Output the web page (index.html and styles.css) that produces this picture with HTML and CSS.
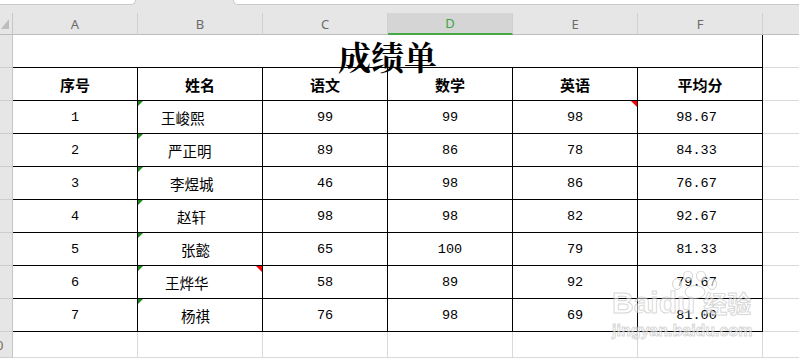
FILE: index.html
```html
<!DOCTYPE html>
<html lang="zh-CN">
<head>
<meta charset="utf-8">
<title>成绩单</title>
<link rel="stylesheet" href="styles.css">
</head>
<body>
<div class="top">
  <div class="tab tab-left"></div>
  <div class="tab tab-right"></div>
</div>
<div class="sheet">
  <div class="corner"><svg class="corner-tri" width="8" height="10" viewBox="0 0 8 10"><polygon points="0,10 8,10 8,0" fill="#bdbdbd"/></svg></div>
  <div class="colhead">A</div>
  <div class="colhead">B</div>
  <div class="colhead">C</div>
  <div class="colhead active">D</div>
  <div class="colhead">E</div>
  <div class="colhead">F</div>
  <div class="colhead rest"></div>

  <div class="rowhead"><span>1</span></div>
  <div class="cell title">成绩单</div>
  <div class="cell g"></div>

  <div class="rowhead"><span>2</span></div>
  <div class="cell tb th">序号</div>
  <div class="cell tb th">姓名</div>
  <div class="cell tb th">语文</div>
  <div class="cell tb th">数学</div>
  <div class="cell tb th">英语</div>
  <div class="cell tb th">平均分</div>
  <div class="cell g"></div>

  <div class="rowhead"><span>3</span></div>
  <div class="cell tb num">1</div>
  <div class="cell tb name note name-1">王峻熙</div>
  <div class="cell tb num">99</div>
  <div class="cell tb num">99</div>
  <div class="cell tb num comment">98</div>
  <div class="cell tb num avg">98.67</div>
  <div class="cell g"></div>

  <div class="rowhead"><span>4</span></div>
  <div class="cell tb num">2</div>
  <div class="cell tb name note name-2">严正明</div>
  <div class="cell tb num">89</div>
  <div class="cell tb num">86</div>
  <div class="cell tb num">78</div>
  <div class="cell tb num avg">84.33</div>
  <div class="cell g"></div>

  <div class="rowhead"><span>5</span></div>
  <div class="cell tb num">3</div>
  <div class="cell tb name note name-3">李煜城</div>
  <div class="cell tb num">46</div>
  <div class="cell tb num">98</div>
  <div class="cell tb num">86</div>
  <div class="cell tb num avg">76.67</div>
  <div class="cell g"></div>

  <div class="rowhead"><span>6</span></div>
  <div class="cell tb num">4</div>
  <div class="cell tb name note name-4">赵轩</div>
  <div class="cell tb num">98</div>
  <div class="cell tb num">98</div>
  <div class="cell tb num">82</div>
  <div class="cell tb num avg">92.67</div>
  <div class="cell g"></div>

  <div class="rowhead"><span>7</span></div>
  <div class="cell tb num">5</div>
  <div class="cell tb name note name-5">张懿</div>
  <div class="cell tb num">65</div>
  <div class="cell tb num">100</div>
  <div class="cell tb num">79</div>
  <div class="cell tb num avg">81.33</div>
  <div class="cell g"></div>

  <div class="rowhead"><span>8</span></div>
  <div class="cell tb num">6</div>
  <div class="cell tb name note comment name-6">王烨华</div>
  <div class="cell tb num">58</div>
  <div class="cell tb num">89</div>
  <div class="cell tb num">92</div>
  <div class="cell tb num avg">79.67</div>
  <div class="cell g"></div>

  <div class="rowhead"><span>9</span></div>
  <div class="cell tb num">7</div>
  <div class="cell tb name note name-7">杨祺</div>
  <div class="cell tb num">76</div>
  <div class="cell tb num">98</div>
  <div class="cell tb num">69</div>
  <div class="cell tb num avg">81.00</div>
  <div class="cell g"></div>

  <div class="rowhead"><span>10</span></div>
  <div class="cell"></div>
  <div class="cell"></div>
  <div class="cell"></div>
  <div class="cell"></div>
  <div class="cell"></div>
  <div class="cell"></div>
  <div class="cell g"></div>
</div>

<div class="watermark">
  <svg class="wm-paw" width="52" height="28" viewBox="0 0 52 28">
    <g fill="rgba(255,255,255,0.6)" stroke="rgba(160,160,160,0.45)" stroke-width="1">
      <ellipse cx="8" cy="13" rx="4.5" ry="5.5"/>
      <ellipse cx="19" cy="5" rx="4.5" ry="5"/>
      <ellipse cx="32" cy="5" rx="4.5" ry="5"/>
      <ellipse cx="43" cy="13" rx="4.5" ry="5.5"/>
      <ellipse cx="26" cy="21" rx="10" ry="6.5"/>
    </g>
  </svg>
  <div class="wm-logo"><span>Baidu</span><span class="wm-jy">经验</span></div>
  <div class="wm-url">jingyan.baidu.com</div>
</div>
</body>
</html>
```
FILE: styles.css
```css
* { box-sizing: border-box; }

html, body {
  margin: 0;
  height: 100%;
  overflow: hidden;
  background: #fff;
}

body {
  font-family: "Noto Sans CJK SC", sans-serif;
  color: #000;
  position: relative;
}

/* top tab strip */
.top {
  height: 13px;
  background: #e6e6e6;
  display: flex;
  align-items: flex-start;
}

.tab {
  height: 5px;
  background: #fff;
  border-bottom: 1px solid #c9c9c9;
}

.tab-left {
  width: 136px;
  border-right: 1px solid #c9c9c9;
  border-bottom-right-radius: 5px;
}

.tab-right {
  flex: 1;
  margin-left: 97px;
  border-left: 1px solid #c9c9c9;
  border-bottom-left-radius: 5px;
}

/* sheet grid */
.sheet {
  display: grid;
  grid-template-columns: 13px repeat(6, 125px) 1fr;
  grid-template-rows: 22px repeat(9, 33px) 1fr;
  height: calc(100% - 13px);
}

.corner {
  background: #e6e6e6;
  border-right: 1px solid #c6c6c6;
  border-bottom: 1px solid #bcbcbc;
}

.corner-tri {
  display: block;
  margin: 6px 0 0 1px;
}

.colhead {
  background: #e6e6e6;
  border-right: 1px solid #d0d0d0;
  border-bottom: 1px solid #bcbcbc;
  color: #6b6b6b;
  font: 13px "Noto Sans", "Liberation Sans", sans-serif;
  display: flex;
  align-items: center;
  justify-content: center;
}

.colhead.active {
  background: #d5d5d5;
  color: #3ea53e;
  border-bottom: 2px solid #47a847;
}

.colhead.rest {
  border-right: none;
}

.rowhead {
  background: #e6e6e6;
  border-right: 1px solid #c6c6c6;
  border-bottom: 1px solid #cdcdcd;
  overflow: hidden;
  display: flex;
  align-items: center;
  color: #7a6a5a;
  font: 13px "Noto Sans", "Liberation Sans", sans-serif;
}

.rowhead span {
  flex: none;
  width: 24px;
  margin-left: -16px;
  text-align: center;
}

.cell {
  border-right: 1px solid #d9d9d9;
  border-bottom: 1px solid #d9d9d9;
  display: flex;
  align-items: center;
  justify-content: center;
  position: relative;
  white-space: nowrap;
}

.cell.tb {
  border-right-color: #000;
  border-bottom-color: #000;
}

.cell.g {
  border-right: none;
}

.title {
  grid-column: 2 / 8;
  border-right-color: #000;
  border-bottom-color: #000;
  font-family: "Noto Serif CJK SC", "Noto Sans CJK SC", serif;
  font-size: 33px;
  font-weight: 700;
  line-height: 33px;
  align-items: flex-start;
  padding-top: 4px;
}

.th {
  font-size: 15px;
  font-weight: 700;
}

.num {
  font: 13.5px "Liberation Mono", "DejaVu Sans Mono", monospace;
}

.avg {
  padding-right: 7px;
}

.name {
  justify-content: flex-start;
  font-size: 14.5px;
  padding-top: 1px;
}

.name-1 { padding-left: 23px; }
.name-2 { padding-left: 30px; }
.name-3 { padding-left: 32px; }
.name-4 { padding-left: 39px; }
.name-5 { padding-left: 43px; }
.name-6 { padding-left: 27px; }
.name-7 { padding-left: 43px; }

/* cell indicators */
.note::before {
  content: "";
  position: absolute;
  top: 0;
  left: 0;
  border-top: 5px solid #1b8a1b;
  border-right: 5px solid transparent;
}

.comment::after {
  content: "";
  position: absolute;
  top: 0;
  right: 0;
  border-top: 6px solid #ff0000;
  border-left: 6px solid transparent;
}

/* watermark overlay */
.watermark {
  position: absolute;
  left: 612px;
  top: 268px;
  width: 150px;
  pointer-events: none;
  color: rgba(255, 255, 255, 0.55);
  -webkit-text-stroke: 1px rgba(165, 165, 165, 0.45);
}

.wm-paw {
  position: absolute;
  left: 57px;
  top: 3px;
}

.wm-logo {
  margin-top: 20px;
  display: flex;
  align-items: baseline;
  font: bold 30px/30px "Liberation Sans", sans-serif;
}

.wm-jy {
  font-family: "Noto Sans CJK SC", sans-serif;
  font-size: 24px;
  margin-left: 8px;
}

.wm-url {
  margin-top: 5px;
  font: bold 16px/16px "Liberation Sans", sans-serif;
}
```
